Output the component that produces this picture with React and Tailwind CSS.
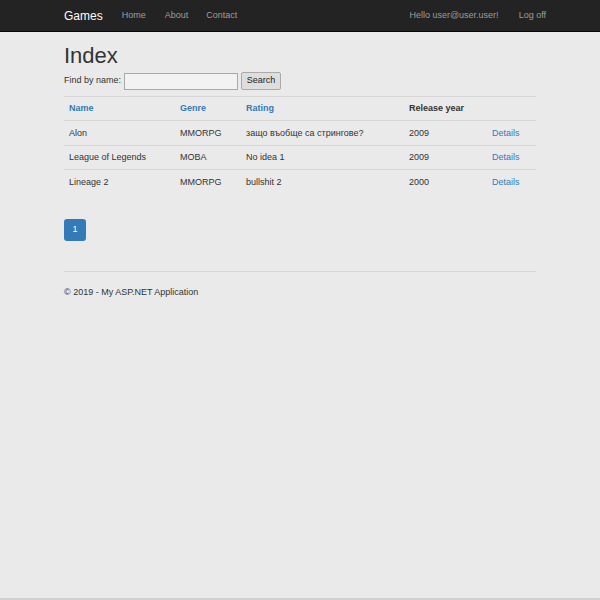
import React from 'react';

const games = [
  { name: 'Alon', genre: 'MMORPG', rating: 'защо въобще са стрингове?', year: 2009 },
  { name: 'League of Legends', genre: 'MOBA', rating: 'No idea 1', year: 2009 },
  { name: 'Lineage 2', genre: 'MMORPG', rating: 'bullshit 2', year: 2000 },
];

// column widths of the index table
const cols = ['w-[111px]', 'w-[66px]', 'w-[163px]', 'w-[83px]', 'flex-1'];

function Row({ cells, header }) {
  return (
    <div className={`flex items-center border-t border-[#d6d6d6] ${header ? 'h-6' : 'h-[24.5px] pt-px'}`}>
      {cells.map((cell, i) => (
        <div key={i} className={`${cols[i]} px-[5px]`}>
          {cell}
        </div>
      ))}
    </div>
  );
}

export default function App() {
  return (
    <div
      className="flex h-[600px] flex-col bg-[#eaeaea] text-[9px] text-[#333] border-b-2 border-[#d0d0d0]"
      style={{ fontFamily: '"Liberation Sans", Arial, "Noto Sans", sans-serif' }}
    >
      {/* Navbar */}
      <div className="h-8 border-b border-[#080808] bg-[#232323]">
        <div className="mx-[64px] flex h-full items-center">
          <span className="text-[12px] text-white">Games</span>
          <span className="ml-[19px] text-[#9d9d9d]">Home</span>
          <span className="ml-[19px] text-[#9d9d9d]">About</span>
          <span className="ml-[18px] text-[#9d9d9d]">Contact</span>
          <span className="ml-auto text-[#9d9d9d]">Hello user@user.user!</span>
          <span className="ml-[20px] mr-[-10px] text-[#9d9d9d]">Log off</span>
        </div>
      </div>

      <div className="mx-[64px] flex flex-col">
        <h2 className="mt-[11px] text-[22px] leading-[26px] text-[#333]">Index</h2>

        <div className="mt-[3px] flex items-center">
          <span>Find by name:</span>
          <input className="ml-[3px] h-[17px] w-[114px] border border-[#a9a9a9] bg-[#f2f2f2]" />
          <button className="ml-[3px] h-[18px] w-[40px] rounded-[2px] border border-[#aaa] bg-[#dedede] text-[9px] text-[#222]">
            Search
          </button>
        </div>

        {/* Table */}
        <div className="mt-[6px] flex flex-col">
          <Row
            header
            cells={[
              <span className="font-bold text-[#337ab7]">Name</span>,
              <span className="font-bold text-[#337ab7]">Genre</span>,
              <span className="font-bold text-[#337ab7]">Rating</span>,
              <span className="font-bold">Release year</span>,
              '',
            ]}
          />
          {games.map((g, i) => (
            <Row
              key={i}
              cells={[g.name, g.genre, g.rating, g.year, <span className="text-[#337ab7]">Details</span>]}
            />
          ))}
        </div>

        {/* Pagination */}
        <div className="mt-[25px] flex">
          <div className="flex h-[22px] w-[22px] items-center justify-center rounded-[3px] bg-[#337ab7] text-white">
            1
          </div>
        </div>

        <div className="mt-[30px] border-t border-[#d6d6d6]" />
        <p className="mt-[14px]">© 2019 - My ASP.NET Application</p>
      </div>
    </div>
  );
}
